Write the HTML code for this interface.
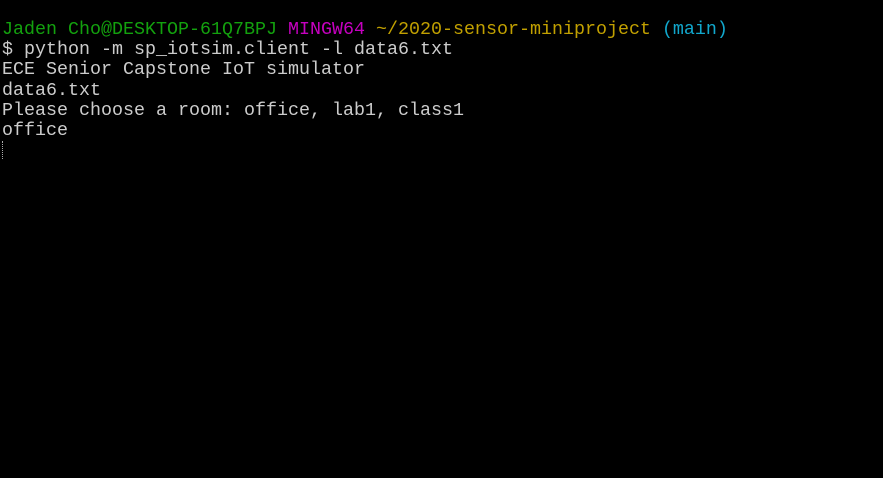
<!DOCTYPE html><html><head><style>
html,body{margin:0;padding:0;background:#000;width:883px;height:478px;overflow:hidden}
pre{margin:0;position:absolute;left:2px;top:20px;font-family:"Liberation Mono",monospace;font-size:18.33px;line-height:20.2px;color:#cccccc;white-space:pre}
.g{color:#13a10e}.m{color:#c600c0}.y{color:#c1a000}.c{color:#11a8cd}
.cur{position:absolute;left:2px;top:141px;width:1px;height:18px;border-left:1px dotted #aaa}
</style></head><body>
<pre><span class="g">Jaden Cho@DESKTOP-61Q7BPJ</span> <span class="m">MINGW64</span> <span class="y">~/2020-sensor-miniproject</span> <span class="c">(main)</span>
$ python -m sp_iotsim.client -l data6.txt
ECE Senior Capstone IoT simulator
data6.txt
Please choose a room: office, lab1, class1
office</pre>
<div class="cur"></div>
</body></html>
